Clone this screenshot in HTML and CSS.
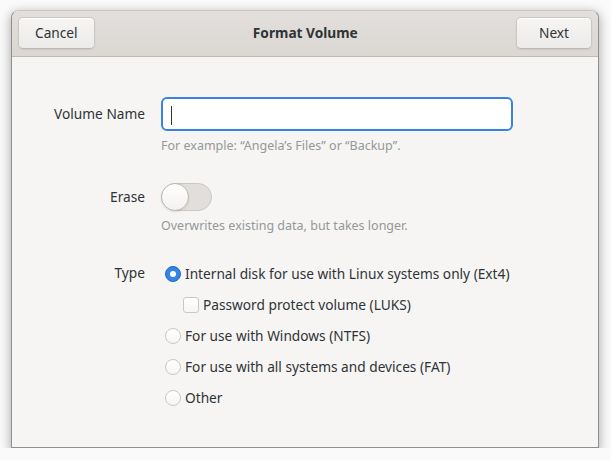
FILE: index.html
```html
<!DOCTYPE html>
<html lang="en">
  <head>
    <meta charset="UTF-8" />
    <title>Format Volume</title>
    <link rel="stylesheet" href="styles.css">
  </head>
  <body>
    <div class="window">
      <div class="headerbar">
        <button class="btn">Cancel</button>
        <div class="title">Format Volume</div>
        <button class="btn">Next</button>
      </div>

      <div class="content">
        <div class="label row-name">Volume Name</div>
        <div class="field">
          <div class="entry"><span class="cursor"></span></div>
          <div class="hint">For example: “Angela’s Files” or “Backup”.</div>
        </div>

        <div class="label row-erase">Erase</div>
        <div class="field">
          <div class="switch"><span class="knob"></span></div>
          <div class="hint hint-erase">Overwrites existing data, but takes longer.</div>
        </div>

        <div class="label row-type">Type</div>
        <div class="field options">
          <div class="option">
            <span class="radio checked"></span>
            <span>Internal disk for use with Linux systems only (Ext4)</span>
          </div>
          <div class="option sub">
            <span class="check"></span>
            <span>Password protect volume (LUKS)</span>
          </div>
          <div class="option">
            <span class="radio"></span>
            <span>For use with Windows (NTFS)</span>
          </div>
          <div class="option">
            <span class="radio"></span>
            <span>For use with all systems and devices (FAT)</span>
          </div>
          <div class="option">
            <span class="radio"></span>
            <span>Other</span>
          </div>
        </div>
      </div>
    </div>
  </body>
</html>
```

FILE: styles.css
```css
* {
  margin: 0;
  padding: 0;
  box-sizing: border-box;
}

body {
  background: #fafafa;
  font-family: "Noto Sans", "Open Sans", sans-serif;
  font-size: 13.7px;
  color: #2e3436;
}

.window {
  margin: 10px 0 0 11px;
  width: 588px;
  height: 438px;
  background: #f6f5f4;
  border: 1px solid #8f8f8f;
  border-top-color: #c9c5c1;
  border-radius: 8px 8px 0 0;
  box-shadow: 0 3px 10px 2px rgba(0, 0, 0, 0.25);
  display: flex;
  flex-direction: column;
}

.headerbar {
  height: 46px;
  flex: none;
  display: flex;
  align-items: center;
  justify-content: space-between;
  padding: 0 6px 1px;
  background: linear-gradient(#e2dfdc, #dbd7d3);
  border-bottom: 1px solid #c0bab3;
  border-radius: 7px 7px 0 0;
}

.btn {
  height: 32px;
  min-width: 76px;
  padding: 0 16px 1px;
  font: inherit;
  color: #2e3436;
  background: linear-gradient(#f6f5f4, #edebe9);
  border: 1px solid #cdc7c2;
  border-bottom-color: #bfb8b1;
  border-radius: 5px;
  box-shadow: inset 0 1px #fff, 0 1px 2px rgba(0, 0, 0, 0.07);
}

.title {
  font-weight: bold;
  padding-bottom: 1px;
}

.content {
  display: grid;
  grid-template-columns: 133px 1fr;
  column-gap: 16px;
  padding-top: 40px;
}

.label {
  text-align: right;
}

.row-name {
  padding-top: 7px;
}

.row-erase {
  padding-top: 33px;
}

.row-type {
  padding-top: 29px;
}

.entry {
  width: 352px;
  height: 34px;
  background: #fff;
  border: 2px solid #3584e4;
  border-radius: 6px;
  padding: 7px 8px;
}

.cursor {
  display: block;
  width: 1px;
  height: 19px;
  background: #2e3436;
}

.hint {
  font-size: 12.5px;
  color: #959898;
  margin-top: 6px;
}

.hint-erase {
  margin-top: 6px;
}

.switch {
  margin-top: 29px;
  width: 51px;
  height: 28px;
  background: #e1dedb;
  border: 1px solid #cdc7c2;
  border-radius: 14px;
  position: relative;
}

.knob {
  position: absolute;
  left: -1px;
  top: -1px;
  width: 28px;
  height: 28px;
  border-radius: 50%;
  background: linear-gradient(#ffffff, #f4f2f0);
  border: 1px solid #bfb8b1;
  box-shadow: 0 1px 2px rgba(0, 0, 0, 0.1);
}

.options {
  padding-top: 24px;
}

.option {
  display: flex;
  align-items: center;
  height: 31px;
  gap: 4px;
  margin-left: 4px;
}

.option.sub {
  margin-left: 22px;
}

.radio,
.check {
  width: 16px;
  height: 16px;
  flex: none;
  background: linear-gradient(#ffffff, #f6f5f4);
  border: 1px solid #cdc7c2;
}

.radio {
  border-radius: 50%;
}

.check {
  border-radius: 3px;
}

.radio.checked {
  border-color: #1b6acb;
  background: #3584e4;
  position: relative;
}

.radio.checked::after {
  content: "";
  position: absolute;
  left: 4px;
  top: 4px;
  width: 6px;
  height: 6px;
  border-radius: 50%;
  background: #fff;
}
```
